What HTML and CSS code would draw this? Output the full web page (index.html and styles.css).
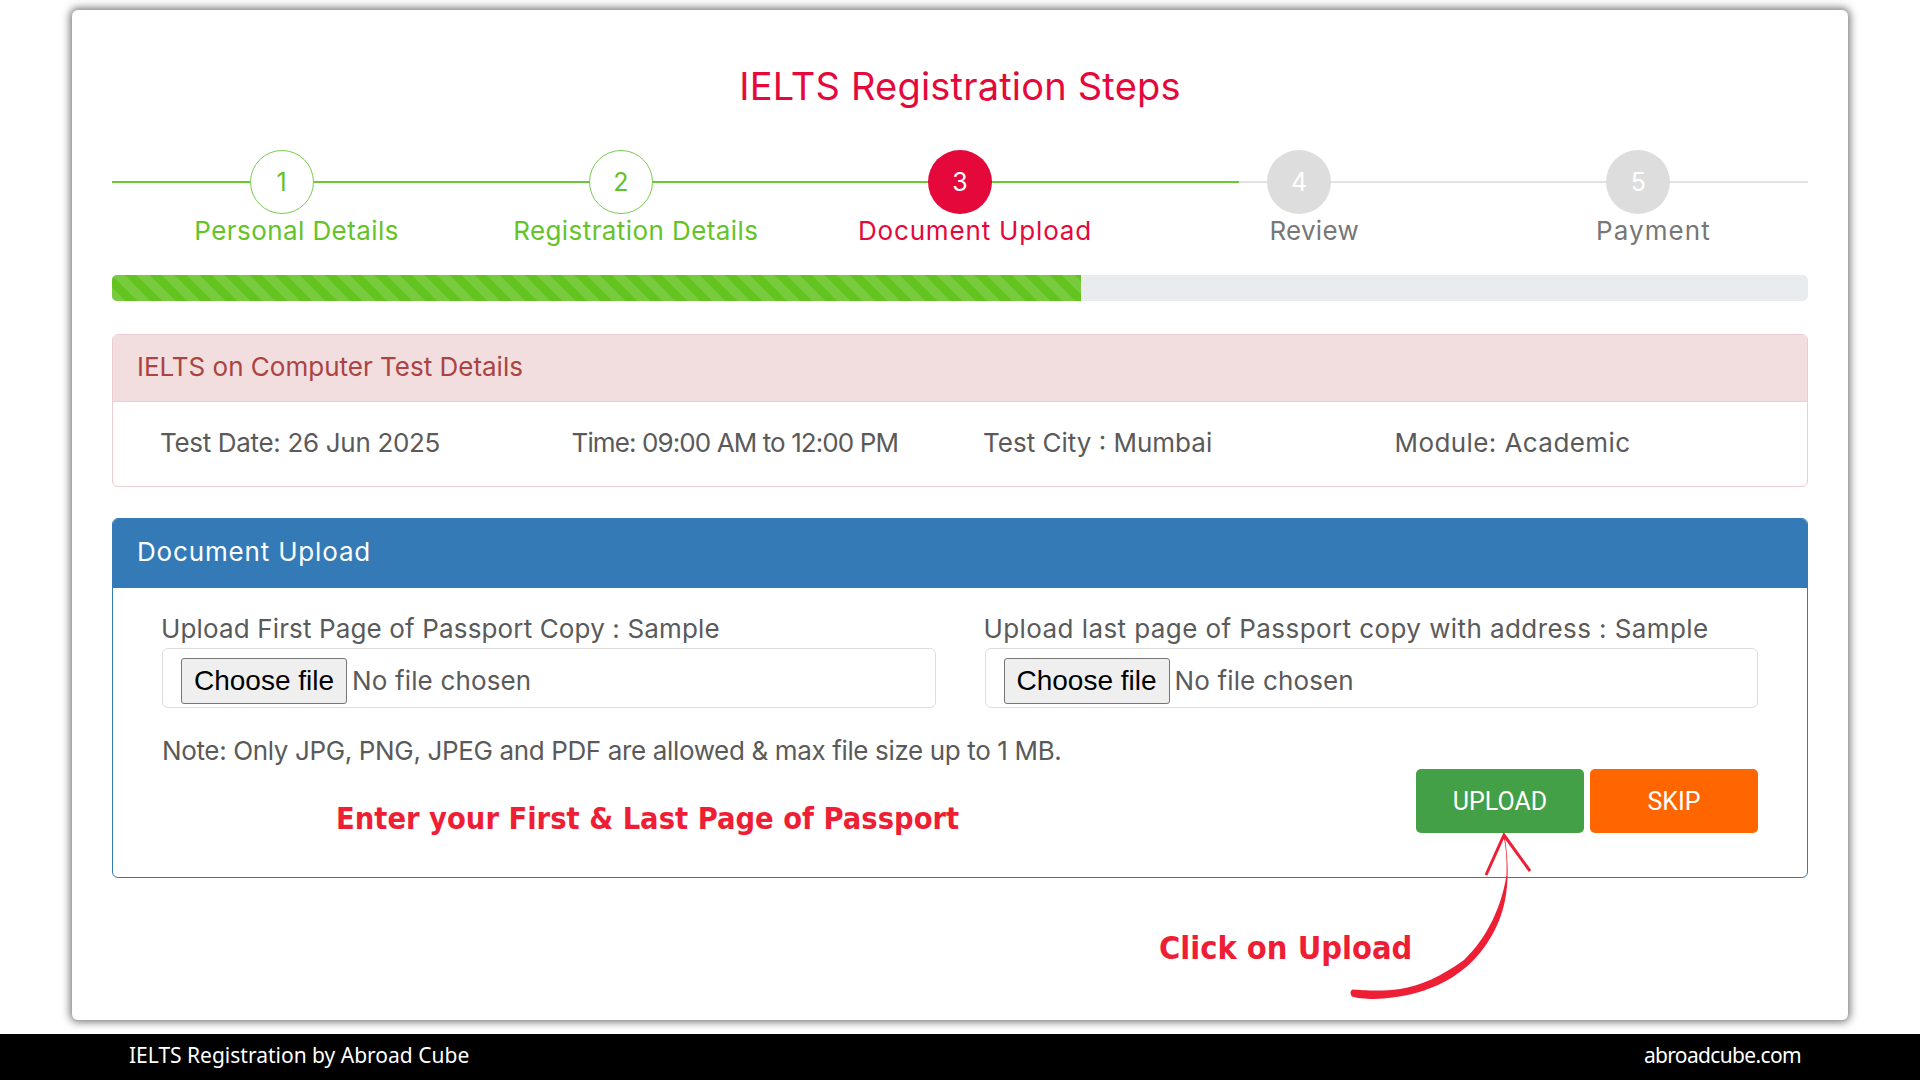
FILE: index.html
```html
<!DOCTYPE html>
<html lang="en">
<head>
<meta charset="utf-8">
<title>IELTS Registration Steps</title>
<link rel="stylesheet" href="styles.css">
</head>
<body>
<main class="stage">
  <section class="card">
    <h1 class="title">IELTS Registration Steps</h1>
    <div class="stepper">
      <div class="track"><div class="track-done"></div></div>
      <div class="step done"><div class="dot">1</div><div class="step-label ls-4">Personal Details</div></div>
      <div class="step done"><div class="dot">2</div><div class="step-label ls-4">Registration Details</div></div>
      <div class="step active"><div class="dot">3</div><div class="step-label ls-8">Document Upload</div></div>
      <div class="step todo"><div class="dot">4</div><div class="step-label ls-3">Review</div></div>
      <div class="step todo"><div class="dot">5</div><div class="step-label ls-11">Payment</div></div>
    </div>
    <div class="progress"><div class="progress-fill"></div></div>
    <div class="panel panel-danger">
      <div class="panel-head">IELTS on Computer Test Details</div>
      <div class="details">
        <div class="ls-n3">Test Date: 26 Jun 2025</div>
        <div class="ls-n9">Time: 09:00 AM to 12:00 PM</div>
        <div>Test City : Mumbai</div>
        <div class="ls-4">Module: Academic</div>
      </div>
    </div>
    <div class="panel panel-primary">
      <div class="panel-head ls-8">Document Upload</div>
      <div class="upload-body">
        <div class="fields">
          <div class="field">
            <label class="field-label ls-1">Upload First Page of Passport Copy : Sample</label>
            <div class="file-box"><button class="file-btn" type="button">Choose file</button><span class="file-name">No file chosen</span></div>
          </div>
          <div class="field">
            <label class="field-label ls-4">Upload last page of Passport copy with address : Sample</label>
            <div class="file-box"><button class="file-btn" type="button">Choose file</button><span class="file-name">No file chosen</span></div>
          </div>
        </div>
        <p class="note">Note: Only JPG, PNG, JPEG and PDF are allowed &amp; max file size up to 1 MB.</p>
        <div class="actions">
          <button class="btn btn-upload" type="button">UPLOAD</button>
          <button class="btn btn-skip" type="button">SKIP</button>
        </div>
      </div>
    </div>
    <div class="hand hand-enter">Enter your First &amp; Last Page of Passport</div>
    <div class="hand hand-click">Click on Upload</div>
    <svg class="arrow" width="200" height="180" viewBox="1340 825 200 180" aria-hidden="true">
      <path class="arrow-fill" d="M1504.5 835 C1510 870 1510 905 1491.5 936 C1478 960 1458 976 1438 985 C1420 993 1400 998 1374 999 C1365 999 1356 998 1352 996.5 C1350 994 1350 990 1353 989.5 C1362 990 1380 992 1400 989 C1420 986 1442 976 1464 960 C1488 937 1502 905 1506.5 875 C1507 860 1506 845 1503 835 Z"/>
      <path class="arrow-head" d="M1486 875 L1504 835 L1530 871"/>
    </svg>
  </section>
</main>
<footer class="footer">
  <span>IELTS Registration by Abroad Cube</span>
  <span class="footer-site">abroadcube.com</span>
</footer>
</body>
</html>
```
FILE: styles.css
```css
* { box-sizing: border-box; }
html, body { margin: 0; height: 100%; }
body {
  display: flex;
  flex-direction: column;
  height: 100vh;
  background: #fff;
  font-family: Inter, "Noto Sans", sans-serif;
  color: #5a5a5a;
  overflow: hidden;
}
.ls-n9 { letter-spacing: -.9px; }
.ls-n3 { letter-spacing: -.32px; }
.ls-1 { letter-spacing: .14px; }
.ls-3 { letter-spacing: .27px; }
.ls-4 { letter-spacing: .42px; }
.ls-8 { letter-spacing: .83px; }
.ls-11 { letter-spacing: 1.1px; }
.stage { flex: 1; padding: 10px 72px 14px; min-height: 0; }
.card {
  position: relative;
  height: 100%;
  background: #fff;
  border-radius: 6px;
  box-shadow: 0 0 9px 2px rgba(0, 0, 0, .55);
  padding: 0 40px;
}
.title {
  margin: 0;
  padding-top: 54px;
  height: 140px;
  font-size: 38px;
  line-height: 44px;
  font-weight: 400;
  text-align: center;
  color: #e4093a;
  letter-spacing: .2px;
}
.stepper {
  position: relative;
  display: grid;
  grid-template-columns: repeat(5, 1fr);
  height: 125px;
}
.track {
  position: absolute;
  left: 0;
  right: 0;
  top: 31px;
  height: 2px;
  background: #e2e2e2;
}
.track-done { width: 1127px; height: 100%; background: #6cc63a; }
.step { position: relative; display: flex; flex-direction: column; align-items: center; }
.dot {
  width: 64px;
  height: 64px;
  border-radius: 50%;
  display: flex;
  align-items: center;
  justify-content: center;
  font-size: 25px;
}
.step-label {
  padding-left: 30px;
  font-size: 26px;
  line-height: 34px;
  white-space: nowrap;
}
.done .dot { background: #fff; border: 1.5px solid #7ccb52; color: #63c328; }
.done .step-label { color: #63c328; }
.active .dot { background: #e4093a; color: #fff; }
.active .step-label { color: #e4093a; }
.todo .dot { background: #ddd; color: #fff; }
.todo .step-label { color: #777; }
.progress {
  height: 26px;
  background: #e9ecef;
  border-radius: 5px;
  overflow: hidden;
}
.progress-fill {
  width: 969px;
  height: 100%;
  background-color: #63c31f;
  background-image: linear-gradient(45deg, rgba(255,255,255,.13) 25%, transparent 25%, transparent 50%, rgba(255,255,255,.13) 50%, rgba(255,255,255,.13) 75%, transparent 75%, transparent);
  background-size: 25px 25px;
}
.panel { border: 1px solid; border-radius: 6px; overflow: hidden; }
.panel-head { padding-left: 24px; font-size: 26px; }
.panel-danger { margin-top: 33px; height: 153px; border-color: #ebccd1; }
.panel-danger .panel-head {
  height: 67px;
  line-height: 64px;
  background: #f2dede;
  color: #a94442;
  border-bottom: 1px solid #ebccd1;
}
.details {
  display: grid;
  grid-template-columns: repeat(4, 1fr);
  padding: 0 24px;
  font-size: 26px;
  line-height: 82px;
}
.details > div { padding-left: 23px; white-space: nowrap; }
.panel-primary { margin-top: 31px; height: 360px; border-color: #337ab7; }
.panel-primary .panel-head {
  height: 69px;
  line-height: 66px;
  background: #337ab7;
  color: #fff;
}
.upload-body { padding: 24px 49px 0; }
.fields { display: grid; grid-template-columns: 1fr 1fr; gap: 49px; }
.field-label { display: block; margin: 0 0 2px -1px; font-size: 26px; line-height: 34px; white-space: nowrap; }
.file-box {
  display: flex;
  align-items: flex-start;
  height: 60px;
  border: 1.5px solid #ddd;
  border-radius: 6px;
  padding: 9px 18px 0;
}
.file-btn {
  width: 166px;
  height: 46px;
  padding: 0;
  font-family: "Liberation Sans", sans-serif;
  font-size: 28px;
  color: #000;
  background: #efefef;
  border: 1px solid #767676;
  border-radius: 3px;
}
.file-name { margin-left: 5px; font-size: 26px; line-height: 45px; letter-spacing: .15px; color: #5a5a5a; }
.note { margin: 26px 0 0; font-size: 26px; line-height: 34px; letter-spacing: -.36px; white-space: nowrap; }
.actions { display: flex; justify-content: flex-end; gap: 6px; margin-top: 1px; }
.btn {
  width: 168px;
  height: 64px;
  border: 0;
  border-radius: 5px;
  font-family: Roboto, sans-serif;
  font-size: 25px;
  color: #fff;
}
.btn-upload { background: #43a047; }
.btn-skip { background: #ff6600; }
.hand {
  position: absolute;
  font-family: "DejaVu Sans Condensed", "DejaVu Sans", sans-serif;
  font-weight: 700;
  color: #ee1e35;
  white-space: nowrap;
}
.hand-enter { left: 264px; top: 789px; font-size: 30.5px; line-height: 40px; }
.hand-click { left: 1087px; top: 918px; font-size: 32.3px; line-height: 40px; }
.arrow { position: absolute; left: 1268px; top: 815px; overflow: visible; }
.arrow-fill { fill: #ee1e35; }
.arrow-head { fill: none; stroke: #ee1e35; stroke-width: 3; }
.footer {
  height: 46px;
  flex: none;
  background: #000;
  color: #fff;
  display: flex;
  justify-content: space-between;
  padding: 0 119px 0 129px;
  font-family: "Noto Sans", sans-serif;
  font-size: 21px;
  line-height: 42px;
}
.footer-site { letter-spacing: -.65px; }
```
